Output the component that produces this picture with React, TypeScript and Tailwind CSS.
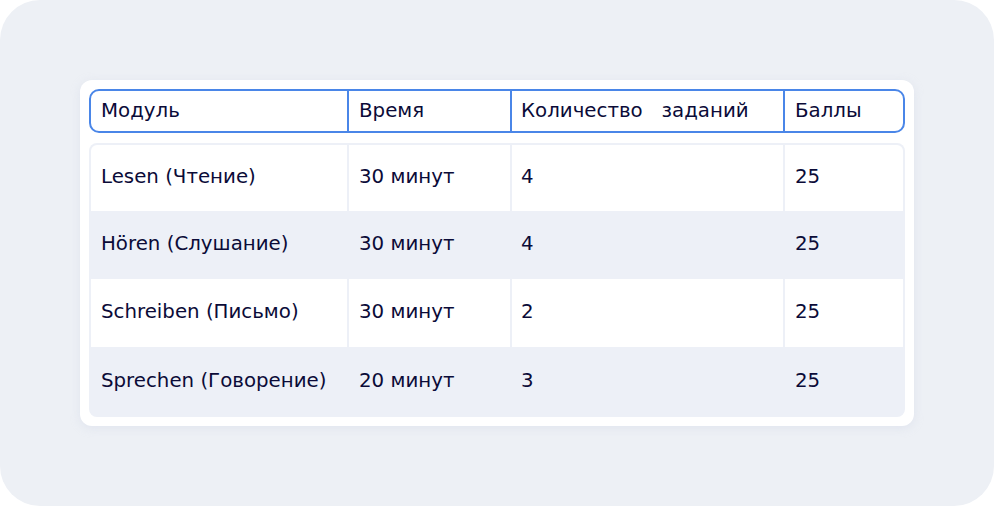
import * as React from "react";

const rows = [
  { module: "Lesen (Чтение)", time: "30 минут", tasks: "4", score: "25" },
  { module: "Hören (Слушание)", time: "30 минут", tasks: "4", score: "25" },
  { module: "Schreiben (Письмо)", time: "30 минут", tasks: "2", score: "25" },
  { module: "Sprechen (Говорение)", time: "20 минут", tasks: "3", score: "25" },
];

const heights = ["h-[66px]", "h-[68px]", "h-[68px]", "h-[70px]"];

const App: React.FC = () => {
  return (
    <div className="w-[994px] h-[506px] bg-white">
      <div className="w-full h-full rounded-[40px] bg-[#edf0f5] p-20 font-['DejaVu_Sans',sans-serif] text-[19.8px] text-[#0b0b38]">
        <div className="bg-white rounded-[12px] p-[9px] shadow-[0_2px_10px_rgba(200,205,225,0.35)]">
          <div className="grid grid-cols-[256px_163px_273px_1fr] h-[44px] border-2 border-[#4a86e8] rounded-[10px]">
            <div className="flex items-center pl-[10px]">Модуль</div>
            <div className="flex items-center pl-[10px] border-l-2 border-[#4a86e8]">Время</div>
            <div className="flex items-center pl-[9px] border-l-2 border-[#4a86e8]">
              Количество&nbsp;&nbsp;&nbsp;заданий
            </div>
            <div className="flex items-center pl-[10px] border-l-2 border-[#4a86e8]">Баллы</div>
          </div>
          <div className="mt-[10px] bg-[#edf0f7] rounded-[8px] px-[2px] pt-[2px] overflow-hidden">
            {rows.map((r, i) => {
              const cell = i % 2 === 0 ? "bg-white" : "bg-transparent";
              return (
                <div
                  key={r.module}
                  className={`grid grid-cols-[256px_161px_271px_1fr] gap-x-[2px] ${heights[i]}`}
                >
                  <div className={`${cell} flex items-center pl-[10px] pb-[3px] ${i === 0 ? "rounded-tl-[6px]" : ""}`}>{r.module}</div>
                  <div className={`${cell} flex items-center pl-[10px] pb-[3px]`}>{r.time}</div>
                  <div className={`${cell} flex items-center pl-[9px] pb-[3px]`}>{r.tasks}</div>
                  <div className={`${cell} flex items-center pl-[10px] pb-[3px] ${i === 0 ? "rounded-tr-[6px]" : ""}`}>{r.score}</div>
                </div>
              );
            })}
          </div>
        </div>
      </div>
    </div>
  );
};

export default App;
